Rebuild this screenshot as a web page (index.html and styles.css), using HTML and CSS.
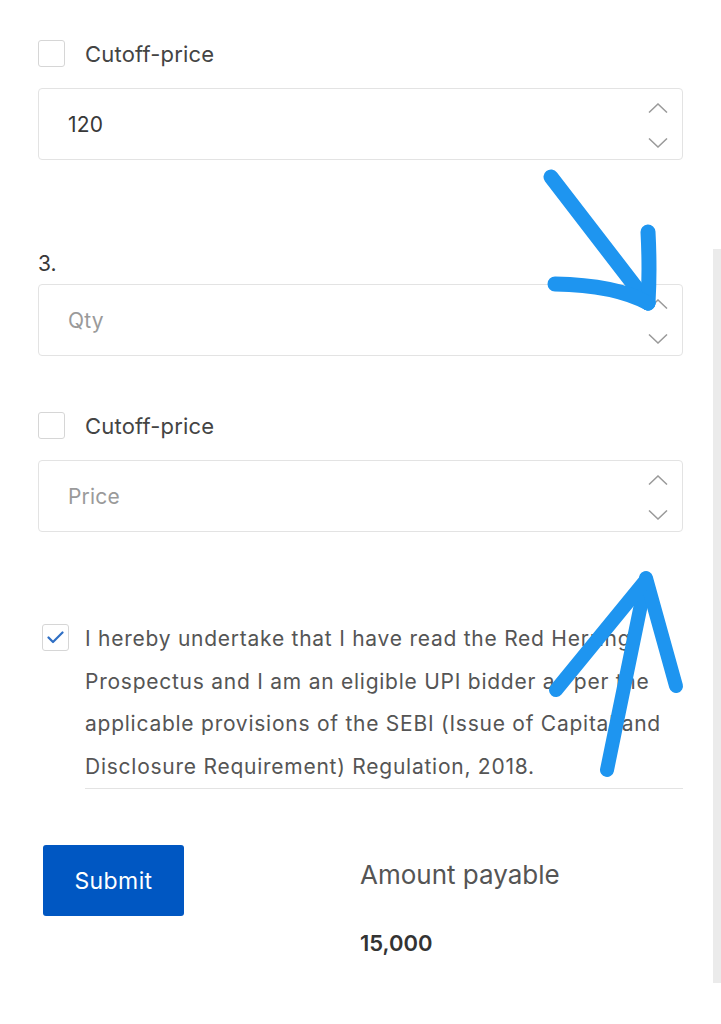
FILE: index.html
```html
<!DOCTYPE html>
<html lang="en">
<head>
<meta charset="utf-8">
<title>Bid form</title>
<link rel="stylesheet" href="styles.css">
</head>
<body>
<div class="page">
  <div class="check-row">
    <span class="box"></span>
    <span class="check-label">Cutoff-price</span>
  </div>
  <div class="field">
    <span class="value">120</span>
    <span class="spinner">
      <svg width="20" height="10" viewBox="0 0 20 10"><path d="M1 9.5 L10 1 L19 9.5" fill="none" stroke="#9a9a9a" stroke-width="1.5"/></svg>
      <svg width="20" height="10" viewBox="0 0 20 10"><path d="M1 0.5 L10 9 L19 0.5" fill="none" stroke="#9a9a9a" stroke-width="1.5"/></svg>
    </span>
  </div>

  <div class="index">3.</div>
  <div class="field field-qty">
    <span class="value placeholder">Qty</span>
    <span class="spinner">
      <svg width="20" height="10" viewBox="0 0 20 10"><path d="M1 9.5 L10 1 L19 9.5" fill="none" stroke="#9a9a9a" stroke-width="1.5"/></svg>
      <svg width="20" height="10" viewBox="0 0 20 10"><path d="M1 0.5 L10 9 L19 0.5" fill="none" stroke="#9a9a9a" stroke-width="1.5"/></svg>
    </span>
  </div>

  <div class="check-row check-row-2">
    <span class="box"></span>
    <span class="check-label">Cutoff-price</span>
  </div>
  <div class="field">
    <span class="value placeholder">Price</span>
    <span class="spinner">
      <svg width="20" height="10" viewBox="0 0 20 10"><path d="M1 9.5 L10 1 L19 9.5" fill="none" stroke="#9a9a9a" stroke-width="1.5"/></svg>
      <svg width="20" height="10" viewBox="0 0 20 10"><path d="M1 0.5 L10 9 L19 0.5" fill="none" stroke="#9a9a9a" stroke-width="1.5"/></svg>
    </span>
  </div>

  <div class="agree">
    <span class="box box-checked">
      <svg width="17" height="13" viewBox="0 0 17 13"><path d="M1.5 6.5 L6 11 L15.5 1.5" fill="none" stroke="#2f6fc4" stroke-width="2.2" stroke-linecap="round" stroke-linejoin="round"/></svg>
    </span>
    <p class="agree-text">I hereby undertake that I have read the Red Herring Prospectus and I am an eligible UPI bidder as per the applicable provisions of the SEBI (Issue of Capital and Disclosure Requirement) Regulation, 2018.</p>
  </div>

  <div class="actions">
    <button class="submit" type="button">Submit</button>
    <div class="amount">
      <div class="amount-label">Amount payable</div>
      <div class="amount-value">15,000</div>
    </div>
  </div>
</div>

<div class="scrollbar"></div>

<svg class="marks" width="721" height="1024" viewBox="0 0 721 1024">
  <g fill="none" stroke="#1e95f0" stroke-linecap="round" stroke-linejoin="round">
    <path d="M551 177 L648 303" stroke-width="15"/>
    <path d="M648 232 Q650 270 648 303" stroke-width="15"/>
    <path d="M555 284 Q615 285 648 303" stroke-width="15"/>
    <path d="M607 770 L646 580" stroke-width="14"/>
    <path d="M646 578 L676 686" stroke-width="14"/>
    <path d="M646 580 L556 690" stroke-width="14"/>
  </g>
</svg>
</body>
</html>
```

FILE: styles.css
```css
* { box-sizing: border-box; }

html, body {
  margin: 0;
  padding: 0;
  background: #ffffff;
}

body {
  font-family: Inter, "Noto Sans", "Liberation Sans", sans-serif;
  color: #444;
  width: 721px;
  height: 1024px;
  position: relative;
  overflow: hidden;
}

.page {
  padding: 40px 38px 0 38px;
  width: 721px;
}

.check-row {
  display: flex;
  align-items: center;
  gap: 20px;
  height: 27px;
}

.check-row-2 {
  margin-top: 56px;
}

.box {
  width: 27px;
  height: 27px;
  border: 1.5px solid #d6d6d6;
  border-radius: 3px;
  background: #fff;
  flex: none;
  display: flex;
  align-items: center;
  justify-content: center;
}

.check-label {
  font-size: 22px;
  letter-spacing: 0.2px;
  color: #444;
  line-height: 27px;
  padding-top: 2px;
}

.field {
  margin-top: 21px;
  height: 72px;
  width: 645px;
  border: 1px solid #e3e3e3;
  border-radius: 4px;
  display: flex;
  align-items: center;
  justify-content: space-between;
  padding-left: 29px;
  padding-right: 14px;
}

.value {
  font-size: 21px;
  letter-spacing: 0.2px;
  color: #383838;
}

.placeholder {
  color: #9a9a9a;
}

.spinner {
  height: 100%;
  display: flex;
  flex-direction: column;
  justify-content: space-between;
  padding: 14px 0 11px 0;
}

.spinner svg {
  display: block;
}

.index {
  margin-top: 92px;
  font-size: 21px;
  line-height: 24px;
  color: #383838;
}

.field-qty {
  margin-top: 8px;
}

.agree {
  margin-top: 86px;
  display: flex;
  align-items: flex-start;
  gap: 16px;
  padding-left: 4px;
}

.box-checked {
  margin-top: 6px;
}

.agree-text {
  margin: 0;
  font-size: 21px;
  letter-spacing: 0.75px;
  line-height: 42.5px;
  color: #555;
  border-bottom: 1px solid #e3e3e3;
  flex: 1;
}

.actions {
  margin-top: 56px;
  display: flex;
  align-items: flex-start;
  padding-left: 5px;
  gap: 176px;
}

.submit {
  width: 141px;
  height: 71px;
  background: #0057c2;
  color: #fff;
  border: none;
  border-radius: 3px;
  font-family: Inter, "Noto Sans", "Liberation Sans", sans-serif;
  font-size: 23px;
  letter-spacing: 0.4px;
  padding: 0;
  padding-top: 1px;
}

.amount {
  padding-top: 15px;
}

.amount-label {
  font-size: 26px;
  line-height: 30px;
  color: #555;
}

.amount-value {
  margin-top: 40px;
  font-size: 22px;
  line-height: 26px;
  font-weight: 600;
  color: #333;
}

.scrollbar {
  position: absolute;
  left: 713px;
  top: 249px;
  width: 8px;
  height: 734px;
  background: #ebebeb;
}

.marks {
  position: absolute;
  left: 0;
  top: 0;
  pointer-events: none;
}
```
